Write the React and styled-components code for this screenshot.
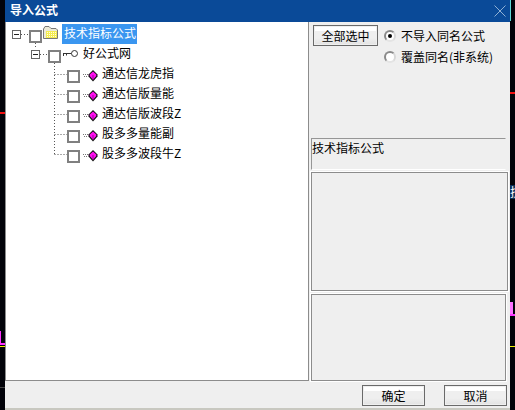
import styled, { createGlobalStyle } from "styled-components";

const GlobalStyle = createGlobalStyle`
  html, body {
    margin: 0;
    padding: 0;
    background: #02030a;
  }
  body {
    font-family: "Noto Sans CJK SC", "Liberation Sans", sans-serif;
    font-size: 12px;
    color: #000;
  }
`;

const formulas = [
  "通达信龙虎指",
  "通达信版量能",
  "通达信版波段Z",
  "股多多量能副",
  "股多多波段牛Z",
];

const App = () => (
  <Page>
    <GlobalStyle />
    <Strip>
      <Mark $top={112} $height={2} $color="#f01010" />
      <Mark $top={331} $height={14} $width={1} $color="#ff30ff" />
      <Mark $top={343} $height={2} $color="#ff30ff" />
      <Mark $top={346} $height={1} $color="#f0f000" />
      <Mark $top={387} $height={1} $color="#444" />
    </Strip>
    <Dialog>
      <TitleBar>
        <Title>导入公式</Title>
        <svg width="12" height="12" viewBox="0 0 12 12">
          <path d="M0.5 0.5 L11.5 11.5 M11.5 0.5 L0.5 11.5" stroke="#8fb0d4" strokeWidth="1" fill="none" />
        </svg>
      </TitleBar>
      <Body>
        <TreeBox>
          <TreeLines width="80" height="170" viewBox="0 0 80 170">
            <path
              d="M15 12.5 H23 M29.5 21 V27 M34 32.5 H42 M48.5 41 V132.5 M48.5 52.5 H61 M48.5 72.5 H61 M48.5 92.5 H61 M48.5 112.5 H61 M48.5 132.5 H61"
              stroke="#555"
              strokeDasharray="1 2"
              fill="none"
            />
          </TreeLines>
          <TreeRow $indent={6}>
            <Expander />
            <Check />
            <FolderIcon />
            <RootLabel>技术指标公式</RootLabel>
          </TreeRow>
          <TreeRow $indent={25}>
            <Expander />
            <Check />
            <KeyIcon />
            <NodeLabel>好公式网</NodeLabel>
          </TreeRow>
          {formulas.map((name) => (
            <TreeRow key={name} $indent={61}>
              <Check />
              <GemIcon />
              <NodeLabel>{name}</NodeLabel>
            </TreeRow>
          ))}
        </TreeBox>
        <Side>
          <OptionRow>
            <PushButton $width={65}>全部选中</PushButton>
            <Radios>
              <RadioRow>
                <Radio $on />
                不导入同名公式
              </RadioRow>
              <RadioRow>
                <Radio />
                覆盖同名(非系统)
              </RadioRow>
            </Radios>
          </OptionRow>
          <CaptionBox>技术指标公式</CaptionBox>
          <WidePanel />
          <NarrowPanel />
        </Side>
      </Body>
      <Footer>
        <PushButton $width={63}>确定</PushButton>
        <PushButton $width={63}>取消</PushButton>
      </Footer>
    </Dialog>
    <Strip>
      <Mark $top={0} $height={21} $width={1} $color="#5fd8d8" />
      <Mark $top={92} $height={2} $color="#f01010" />
      <Ticker>技</Ticker>
      <Mark $top={302} $height={12} $width={3} $color="#ff70ff" />
      <Mark $top={314} $height={2} $color="#ff30ff" />
      <Mark $top={346} $height={1} $color="#f0f000" />
    </Strip>
  </Page>
);

const FolderIcon = () => (
  <IconSvg width="15" height="13" viewBox="0 0 15 13" $left={1} $top={-2}>
    <defs>
      <pattern id="dither" width="2" height="2" patternUnits="userSpaceOnUse">
        <rect width="2" height="2" fill="#f4ec50" />
        <rect width="1" height="1" fill="#fffce0" />
      </pattern>
    </defs>
    <path d="M0.5 3 L2 0.5 H6 L8 2.5 H13 L14.5 4 V12.5 H0.5 Z" fill="#ecead8" stroke="#777" />
    <rect x="3" y="5" width="11" height="7" fill="url(#dither)" />
  </IconSvg>
);

const KeyIcon = () => (
  <IconSvg width="16" height="8" viewBox="0 0 16 8" $left={2} $top={0}>
    <path d="M0.5 3 V6 M3.5 3.5 V5.5 M0.5 3.5 H8.5" stroke="#333" fill="none" />
    <circle cx="11.5" cy="3.5" r="3" fill="#fff" stroke="#333" />
  </IconSvg>
);

const GemIcon = () => (
  <IconSvg width="15" height="12" viewBox="0 0 15 12" $left={3} $top={2}>
    <path d="M0 4.5 H5 M1 6.5 H5" stroke="#777" strokeDasharray="1 1" fill="none" />
    <path d="M10 0 L14.5 4.5 V6.5 L10 11.5 L5.5 6.5 V4.5 Z" fill="#111" />
    <path d="M10 1.5 L13.3 4.5 V6 L10 9.8 L6.7 6 V4.5 Z" fill="#ff10f0" />
    <path d="M10 5 V9.5" stroke="#a000a0" strokeWidth="1" fill="none" />
  </IconSvg>
);

const Page = styled.div`
  display: flex;
  width: 515px;
  height: 410px;
  overflow: hidden;
  background: #02030a;
`;

const Strip = styled.div`
  position: relative;
  flex: 0 0 5px;
`;

const Mark = styled.div`
  position: absolute;
  left: 0;
  top: ${(p) => p.$top}px;
  width: ${(p) => p.$width || 5}px;
  height: ${(p) => p.$height}px;
  background: ${(p) => p.$color};
`;

const Ticker = styled.div`
  position: absolute;
  top: 185px;
  left: 0;
  width: 5px;
  height: 14px;
  overflow: hidden;
  background: #0c3058;
  color: #fff;
  line-height: 14px;
`;

const Dialog = styled.div`
  flex: 0 0 505px;
  display: flex;
  flex-direction: column;
  height: 408px;
  background: #efefef;
  border-bottom: 2px solid #c8c8c0;
`;

const TitleBar = styled.div`
  box-sizing: border-box;
  flex: 0 0 22px;
  display: flex;
  align-items: center;
  justify-content: space-between;
  padding: 0 4px 0 5px;
  background: #0a4a98;
`;

const Title = styled.span`
  color: #fff;
  font-size: 12px;
  font-weight: 700;
  line-height: 18px;
  margin-bottom: 2px;
`;

const Body = styled.div`
  flex: 0 0 359px;
  display: flex;
  gap: 2px;
`;

const TreeBox = styled.div`
  position: relative;
  box-sizing: border-box;
  flex: 0 0 304px;
  padding-top: 2px;
  background: #fff;
  border: 1px solid #8c8c8c;
  border-top: none;
`;

const TreeLines = styled.svg`
  position: absolute;
  top: 0;
  left: 0;
`;

const TreeRow = styled.div`
  position: relative;
  display: flex;
  align-items: center;
  height: 20px;
  padding-left: ${(p) => p.$indent}px;
`;

const Expander = styled.span`
  position: relative;
  box-sizing: border-box;
  width: 9px;
  height: 9px;
  margin: 1px 8px 0 0;
  border: 1px solid #666;
  background: #fff;
  &::after {
    content: "";
    position: absolute;
    left: 1px;
    right: 1px;
    top: 3px;
    height: 1px;
    background: #222;
  }
`;

const Check = styled.span`
  position: relative;
  box-sizing: border-box;
  width: 13px;
  height: 13px;
  margin-top: 5px;
  border: 2px solid #808080;
  background: #fff;
`;

const IconSvg = styled.svg`
  position: relative;
  flex: none;
  margin-left: ${(p) => p.$left}px;
  top: ${(p) => p.$top}px;
`;

const RootLabel = styled.span`
  margin-left: 4px;
  padding: 0 2px;
  height: 20px;
  line-height: 18px;
  width: 75px;
  box-sizing: border-box;
  background: #3a96f0;
  color: #fff;
  white-space: nowrap;
`;

const NodeLabel = styled.span`
  margin: 0 0 2px 4px;
  white-space: nowrap;
  line-height: 18px;
`;

const Side = styled.div`
  display: flex;
  flex-direction: column;
  flex: 1;
  min-width: 0;
`;

const OptionRow = styled.div`
  box-sizing: border-box;
  flex: 0 0 116px;
  display: flex;
  align-items: flex-start;
  gap: 6px;
  padding: 3px 0 0 2px;
`;

const PushButton = styled.button`
  box-sizing: border-box;
  width: ${(p) => p.$width}px;
  height: 21px;
  padding: 0;
  border: 1px solid #6a6a6a;
  outline: none;
  box-shadow: inset 0 0 0 1px #efefef;
  background: linear-gradient(#fff 0 5px, #efefef 5px 12px, #e2e2e2);
  color: #000;
  font: inherit;
  font-size: 12px;
  line-height: 18px;
`;

const Radios = styled.div`
  display: flex;
  flex-direction: column;
`;

const RadioRow = styled.div`
  display: flex;
  align-items: center;
  gap: 5px;
  height: 21px;
  white-space: nowrap;
`;

const Radio = styled.span`
  position: relative;
  box-sizing: border-box;
  width: 12px;
  height: 12px;
  border-radius: 50%;
  border: 2px solid #8a8a8a;
  border-right-color: #d8d8d8;
  border-bottom-color: #e4e4e4;
  background: #fff;
  &::after {
    content: "";
    display: ${(p) => (p.$on ? "block" : "none")};
    position: absolute;
    left: 2px;
    top: 2px;
    width: 4px;
    height: 4px;
    border-radius: 50%;
    background: #000;
  }
`;

const CaptionBox = styled.div`
  box-sizing: border-box;
  flex: 0 0 32px;
  width: 195px;
  border: 1px solid #969696;
  border-bottom: 1px solid #fff;
  border-right-color: #efefef;
  line-height: 18px;
  white-space: nowrap;
`;

const Panel = styled.div`
  box-sizing: border-box;
  border: 1px solid #8c8c8c;
  box-shadow: 0 0 0 1px #fff;
`;

const WidePanel = styled(Panel)`
  flex: 0 0 119px;
  width: 197px;
  margin-top: 2px;
`;

const NarrowPanel = styled(Panel)`
  flex: 0 0 87px;
  width: 195px;
  margin-top: 3px;
`;

const Footer = styled.div`
  flex: 1;
  display: flex;
  justify-content: flex-end;
  align-items: flex-start;
  gap: 19px;
  padding: 4px 3px 0 0;
`;

export default App;
